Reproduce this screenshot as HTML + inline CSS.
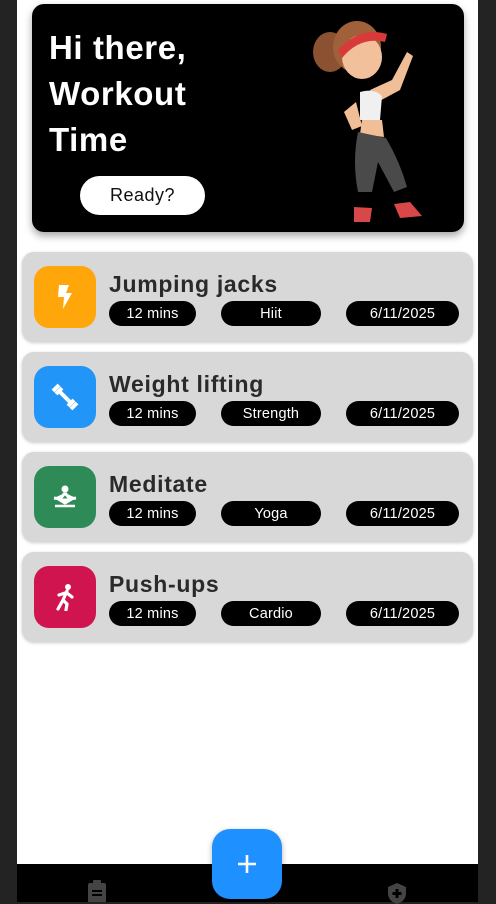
<!DOCTYPE html>
<html><head><style>
*{margin:0;padding:0;box-sizing:border-box}
body{width:496px;height:902px;background:#232323;position:relative;overflow:hidden;font-family:"Liberation Sans",sans-serif}
.screen{position:absolute;left:17px;top:0;width:461px;height:902px;background:#fff}
.banner{position:absolute;left:32px;top:4px;width:432px;height:228px;background:#000;border-radius:12px;box-shadow:0 4px 8px rgba(0,0,0,.35)}
.banner h1{position:absolute;left:17px;top:21px;color:#fff;font-size:33px;line-height:46px;font-weight:bold;letter-spacing:.6px}
.ready{position:absolute;left:48px;top:172px;width:125px;height:39px;background:#fff;border-radius:20px;text-align:center;line-height:39px;font-size:18px;color:#111;letter-spacing:.5px}
.card{position:absolute;left:22px;width:451px;height:90px;background:#d8d8d8;border-radius:12px;box-shadow:0 1px 3px rgba(0,0,0,.2)}
.ic{position:absolute;left:12px;top:14px;width:62px;height:62px;border-radius:15px;display:flex;align-items:center;justify-content:center}
.t{position:absolute;left:87px;top:19px;font-size:23px;font-weight:bold;color:#2a2a2a;letter-spacing:.7px}
.p{position:absolute;top:49px;height:25px;background:#000;color:#fff;border-radius:13px;text-align:center;line-height:26px;font-size:14.5px;letter-spacing:.2px}
.p1{left:87px;width:87px}.p2{left:199px;width:100px}.p3{left:324px;width:113px}
.bar{position:absolute;left:17px;top:864px;width:461px;height:38px;background:#000}
.fab{position:absolute;left:212px;top:829px;width:70px;height:70px;background:#1e90ff;border-radius:18px;box-shadow:0 2px 6px rgba(0,0,0,.3)}
</style></head><body>
<div class="screen"></div>
<div class="banner"><h1>Hi there,<br>Workout<br>Time</h1><div class="ready">Ready?</div>
<svg style="position:absolute;left:250px;top:8px" width="170" height="215" viewBox="0 0 170 215">
<ellipse cx="48" cy="40" rx="17" ry="20" fill="#8a5230"/>
<ellipse cx="75" cy="35" rx="24" ry="26" fill="#a0603a"/>
<ellipse cx="80" cy="45" rx="20" ry="22" fill="#f2c09a"/>
<path d="M56 38 Q78 14 105 22 L103 30 Q78 24 60 46Z" fill="#d83a3a"/>
<path d="M88 78 L110 68 L125 40 L131 44 L118 78 L92 92Z" fill="#f0bf98"/>
<path d="M78 80 Q92 76 100 84 L98 108 L78 108Z" fill="#f0f0f0"/>
<path d="M80 108 L100 108 L102 125 L78 122Z" fill="#f0bf98"/>
<path d="M74 90 L62 100 L70 118 L80 114Z" fill="#f0bf98"/>
<path d="M76 120 L104 126 Q118 150 125 175 L112 180 L96 150 L90 180 L76 180 Q70 150 76 120Z" fill="#4a4a4a"/>
<path d="M72 195 L90 196 L88 210 L72 210Z" fill="#d84848"/>
<path d="M112 192 L128 190 L140 204 L118 206Z" fill="#d84848"/>
</svg></div>

<div class="card" style="top:252px"><div class="ic" style="background:#ffa60a"><svg width="20" height="26" viewBox="0 0 20 26"><path d="M4 1 L14 1 L11 9 L17 9 L8 25 L9 13 L3 13Z" fill="#fff"/></svg></div><div class="t">Jumping jacks</div><div class="p p1">12 mins</div><div class="p p2">Hiit</div><div class="p p3">6/11/2025</div></div>
<div class="card" style="top:352px"><div class="ic" style="background:#2196f8"><svg width="28" height="28" viewBox="0 0 28 28"><path d="M8 8 L20 20" stroke="#fff" stroke-width="4"/><path d="M2 8 L8 2 M5 11 L11 5 M17 23 L23 17 M20 26 L26 20" stroke="#fff" stroke-width="4"/></svg></div><div class="t">Weight lifting</div><div class="p p1">12 mins</div><div class="p p2">Strength</div><div class="p p3">6/11/2025</div></div>
<div class="card" style="top:452px"><div class="ic" style="background:#2e8b57"><svg width="26" height="24" viewBox="0 0 26 24"><circle cx="13" cy="4" r="3.5" fill="#fff"/><path d="M13 8 L8 14 L2 13 M13 8 L18 14 L24 13 M8 15 L18 15 L13 18Z" stroke="#fff" stroke-width="3" fill="#fff"/><path d="M3 21 L23 21" stroke="#fff" stroke-width="2.5"/></svg></div><div class="t">Meditate</div><div class="p p1">12 mins</div><div class="p p2">Yoga</div><div class="p p3">6/11/2025</div></div>
<div class="card" style="top:552px"><div class="ic" style="background:#d0144f"><svg width="24" height="28" viewBox="0 0 24 28"><circle cx="15" cy="4" r="3" fill="#fff"/><path d="M14 8 L10 17 L14 21 L13 27 M10 17 L5 26 M14 10 L19 14 M12 10 L6 12" stroke="#fff" stroke-width="3.2" fill="none" stroke-linecap="round"/></svg></div><div class="t">Push-ups</div><div class="p p1">12 mins</div><div class="p p2">Cardio</div><div class="p p3">6/11/2025</div></div>

<div class="bar">
<svg style="position:absolute;left:69px;top:16px" width="22" height="22" viewBox="0 0 22 22"><rect x="2" y="3" width="18" height="22" rx="2" fill="#444"/><rect x="7" y="0" width="8" height="5" rx="1" fill="#444"/><path d="M6 11h10M6 15h10" stroke="#000" stroke-width="2"/></svg>
<svg style="position:absolute;left:369px;top:18px" width="22" height="22" viewBox="0 0 22 22"><path d="M11 1 L20 5 V11 Q20 19 11 22 Q2 19 2 11 V5Z" fill="#444"/><path d="M11 7v9M6.5 11.5h9" stroke="#000" stroke-width="3"/></svg>
</div>
<div class="fab"><svg style="position:absolute;left:25px;top:25px" width="20" height="20" viewBox="0 0 20 20"><path d="M10 1v18M1 10h18" stroke="#fff" stroke-width="2.6"/></svg></div>
</body></html>
